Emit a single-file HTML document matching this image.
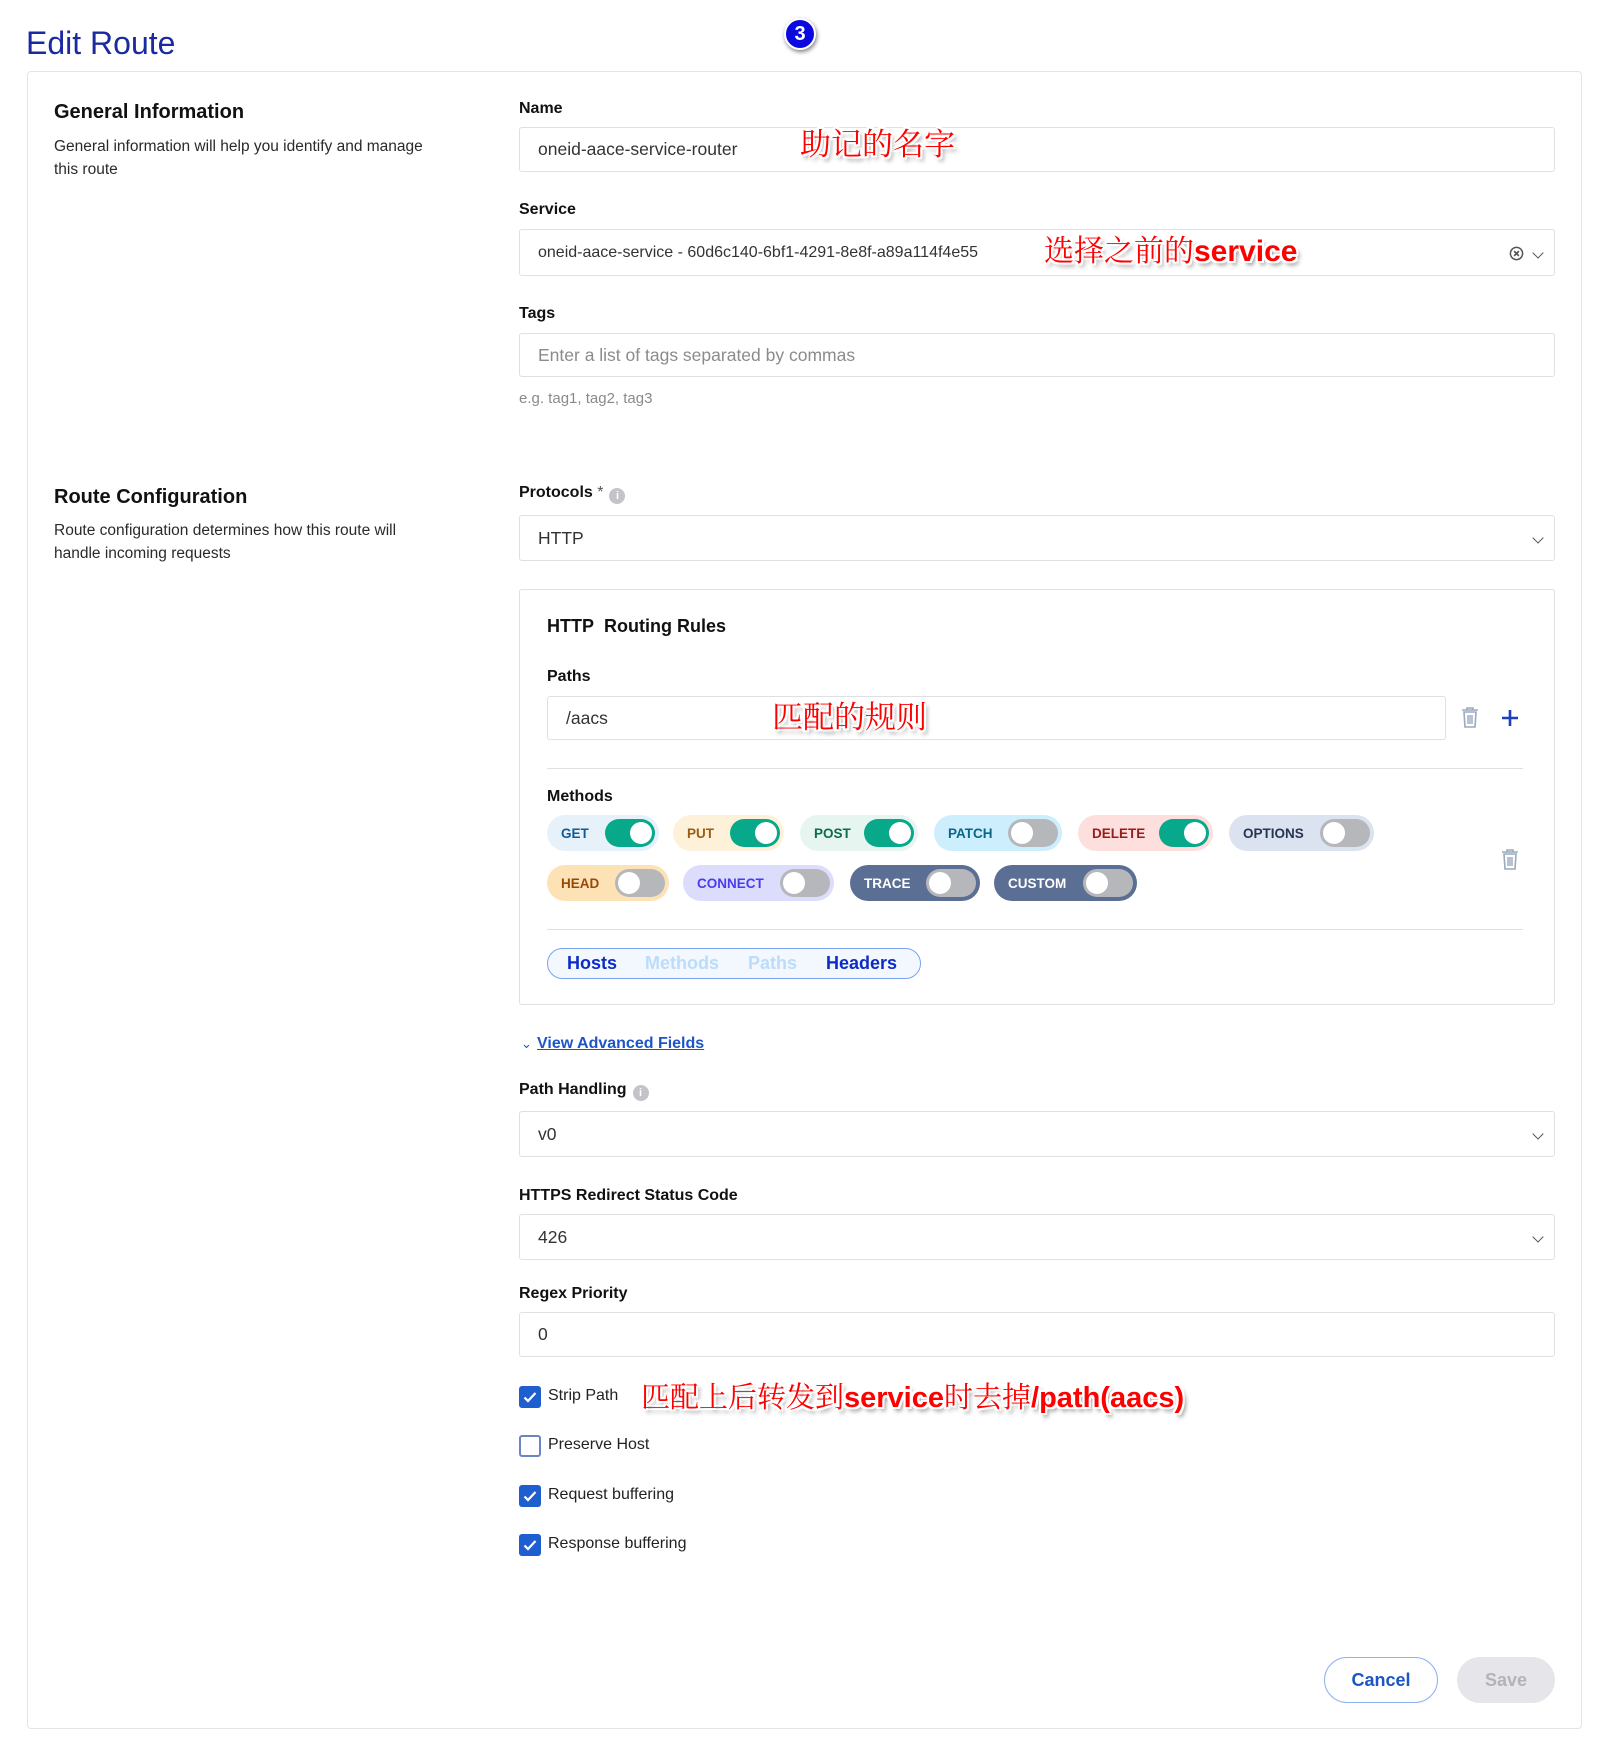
<!DOCTYPE html>
<html><head><meta charset="utf-8"><style>
*{box-sizing:border-box;margin:0;padding:0}
body{width:1608px;height:1754px;background:#fff;font-family:"Liberation Sans","Noto Sans CJK SC",sans-serif;position:relative;overflow:hidden;color:#111}
.a{position:absolute}
.card{left:27px;top:71px;width:1555px;height:1658px;border:1px solid #e3e4e8;border-radius:4px}
.h{font-weight:bold;font-size:20px;color:#111;left:54px}
.d{font-size:15.5px;line-height:23px;color:#2a2a2a;left:54px}
.lbl{font-weight:bold;font-size:16px;color:#111;left:519px}
.in{left:519px;width:1036px;border:1px solid #dfe0e4;border-radius:3px;background:#fff;font-size:17.5px;color:#333;padding-left:18px;display:flex;align-items:center}
.chev{position:absolute;right:12px;top:50%;margin-top:-4px;width:8px;height:8px;border-right:1.6px solid #555;border-bottom:1.6px solid #555;transform:rotate(45deg)}
.ann{color:#f00;font-size:31px;font-family:"Noto Serif CJK SC","Noto Sans CJK SC",serif;text-shadow:-2px -2px 0 #fff,2px -2px 0 #fff,-2px 2px 0 #fff,2px 2px 0 #fff,0 2px 0 #fff,2px 0 0 #fff,-2px 0 0 #fff,0 -2px 0 #fff,3px 4px 4px rgba(0,0,0,.45);white-space:nowrap}
.ann b{font-family:"Liberation Sans",sans-serif}
.pill{position:absolute;height:36px;border-radius:18px;font-weight:bold;font-size:13.5px;display:flex;align-items:center;padding-left:14px}
.tg{position:absolute;right:4px;top:4px;width:50px;height:28px;border-radius:14px;background:#b6b7bb}
.tg.on{background:#08a88a}
.tg::after{content:"";position:absolute;top:3px;left:3px;width:22px;height:22px;border-radius:50%;background:#fff}
.tg.on::after{left:25px}
.cb{position:absolute;left:519px;width:22px;height:22px;border-radius:3px;background:#1f5ecf}
.cb svg{position:absolute;left:3px;top:3px}
.cb.off{background:#fff;border:2px solid #6b84c4}
.cbl{position:absolute;left:548px;font-size:16px;color:#222}
.info{display:inline-block;width:16px;height:16px;border-radius:50%;background:#c3c4c7;color:#fff;font-size:11px;text-align:center;line-height:16px;font-weight:bold;vertical-align:-2px;margin-left:6px}
</style></head><body>
<div class="a" style="left:26px;top:25px;font-size:32px;color:#1b2aa0">Edit Route</div>
<div class="a" style="left:784px;top:18px;width:32px;height:32px;border-radius:50%;background:#0a0ae0;border:2px solid #fff;box-shadow:1px 2px 4px rgba(0,0,0,.5);color:#fff;font-weight:bold;font-size:20px;text-align:center;line-height:28px">3</div>
<div class="a card"></div>

<div class="a h" style="top:101px">General Information</div>
<div class="a d" style="top:135px">General information will help you identify and manage<br>this route</div>

<div class="a lbl" style="top:100px">Name</div>
<div class="a in" style="top:127px;height:45px">oneid-aace-service-router</div>
<div class="a ann" style="left:800px;top:119px">助记的名字</div>

<div class="a lbl" style="top:201px">Service</div>
<div class="a in" style="top:229px;height:47px;font-size:16px">oneid-aace-service - 60d6c140-6bf1-4291-8e8f-a89a114f4e55
<svg class="a" style="right:30px;top:16px" width="15" height="15" viewBox="0 0 16 16"><circle cx="8" cy="8" r="6.5" fill="none" stroke="#555" stroke-width="1.6"/><path d="M5.5 5.5l5 5M10.5 5.5l-5 5" stroke="#555" stroke-width="1.8"/></svg><span class="chev"></span></div>
<div class="a ann" style="left:1044px;top:226px;font-size:30px">选择之前的<b style="font-weight:bold">service</b></div>

<div class="a lbl" style="top:305px">Tags</div>
<div class="a in" style="top:333px;height:44px;color:#8b8b8b">Enter a list of tags separated by commas</div>
<div class="a" style="left:519px;top:390px;font-size:15px;color:#8a8a8a">e.g. tag1, tag2, tag3</div>

<div class="a h" style="top:486px">Route Configuration</div>
<div class="a d" style="top:519px">Route configuration determines how this route will<br>handle incoming requests</div>

<div class="a lbl" style="top:484px">Protocols <span style="font-weight:normal;color:#555">*</span><span class="info">i</span></div>
<div class="a in" style="top:515px;height:46px">HTTP<span class="chev"></span></div>

<div class="a" style="left:519px;top:589px;width:1036px;height:416px;border:1px solid #dfe0e4;border-radius:3px"></div>
<div class="a" style="left:547px;top:616px;font-weight:bold;font-size:18px">HTTP&nbsp; Routing Rules</div>
<div class="a lbl" style="left:547px;top:668px">Paths</div>
<div class="a in" style="left:547px;top:696px;width:899px;height:44px">/aacs</div>
<div class="a ann" style="left:772px;top:692px">匹配的规则</div>
<svg class="a" style="left:1460px;top:706px" width="20" height="22" viewBox="0 0 20 22"><path d="M2 4h16M7 4V2h6v2M4 6h12l-1 15H5z" fill="none" stroke="#9aa9bd" stroke-width="1.6"/><path d="M8 9v9M10 9v9M12 9v9" stroke="#9aa9bd" stroke-width="1.4"/></svg>
<svg class="a" style="left:1501px;top:709px" width="18" height="18" viewBox="0 0 18 18"><path d="M9 1v16M1 9h16" stroke="#1a3fc0" stroke-width="2.6"/></svg>
<div class="a" style="left:547px;top:768px;width:976px;height:1px;background:#dfe0e4"></div>
<div class="a lbl" style="left:547px;top:788px">Methods</div>

<div class="pill" style="left:547px;top:815px;width:112px;background:#e7f1fa;color:#0e5b99">GET<span class="tg on"></span></div>
<div class="pill" style="left:673px;top:815px;width:111px;background:#fdf2d9;color:#a05a0e">PUT<span class="tg on"></span></div>
<div class="pill" style="left:800px;top:815px;width:118px;background:#e6f5f0;color:#0b6c4e">POST<span class="tg on"></span></div>
<div class="pill" style="left:934px;top:815px;width:128px;background:#cdeefc;color:#0a6688">PATCH<span class="tg"></span></div>
<div class="pill" style="left:1078px;top:815px;width:135px;background:#fde0de;color:#991b1b">DELETE<span class="tg on"></span></div>
<div class="pill" style="left:1229px;top:815px;width:145px;background:#dbe3f0;color:#283552">OPTIONS<span class="tg"></span></div>
<div class="pill" style="left:547px;top:865px;width:122px;background:#fde2b5;color:#99480a">HEAD<span class="tg"></span></div>
<div class="pill" style="left:683px;top:865px;width:151px;background:#dcdcfc;color:#4a3bef">CONNECT<span class="tg"></span></div>
<div class="pill" style="left:850px;top:865px;width:130px;background:#5b6f95;color:#fff">TRACE<span class="tg"></span></div>
<div class="pill" style="left:994px;top:865px;width:143px;background:#5b6f95;color:#fff">CUSTOM<span class="tg"></span></div>
<svg class="a" style="left:1500px;top:848px" width="20" height="22" viewBox="0 0 20 22"><path d="M2 4h16M7 4V2h6v2M4 6h12l-1 15H5z" fill="none" stroke="#9aa9bd" stroke-width="1.6"/><path d="M8 9v9M10 9v9M12 9v9" stroke="#9aa9bd" stroke-width="1.4"/></svg>

<div class="a" style="left:547px;top:929px;width:976px;height:1px;background:#dfe0e4"></div>
<div class="a" style="left:547px;top:948px;width:374px;height:31px;border:1px solid #7aa2f2;border-radius:16px;background:#f3f8ff;font-weight:bold;font-size:18px;line-height:29px">
<span class="a" style="left:19px;color:#0d2cc6">Hosts</span><span class="a" style="left:97px;color:#bcdcfa">Methods</span><span class="a" style="left:200px;color:#bcdcfa">Paths</span><span class="a" style="left:278px;color:#0d2cc6">Headers</span></div>

<div class="a" style="left:521px;top:1036px;font-size:13px;color:#1d55c9">&#8964;</div>
<div class="a" style="left:537px;top:1035px;font-size:16px;font-weight:bold;color:#1d55c9;text-decoration:underline">View Advanced Fields</div>

<div class="a lbl" style="top:1081px">Path Handling<span class="info">i</span></div>
<div class="a in" style="top:1111px;height:46px">v0<span class="chev"></span></div>
<div class="a lbl" style="top:1187px">HTTPS Redirect Status Code</div>
<div class="a in" style="top:1214px;height:46px">426<span class="chev"></span></div>
<div class="a lbl" style="top:1285px">Regex Priority</div>
<div class="a in" style="top:1312px;height:45px">0</div>

<div class="cb" style="top:1386px"><svg width="16" height="16" viewBox="0 0 16 16"><path d="M2.5 8.5l3.5 3.5 7.5-8" fill="none" stroke="#fff" stroke-width="2.2"/></svg></div>
<div class="cbl" style="top:1387px">Strip Path</div>
<div class="a ann" style="left:641px;top:1375px;font-size:29px">匹配上后转发到<b>service</b>时去掉<b>/path(aacs)</b></div>
<div class="cb off" style="top:1435px"></div>
<div class="cbl" style="top:1436px">Preserve Host</div>
<div class="cb" style="top:1485px"><svg width="16" height="16" viewBox="0 0 16 16"><path d="M2.5 8.5l3.5 3.5 7.5-8" fill="none" stroke="#fff" stroke-width="2.2"/></svg></div>
<div class="cbl" style="top:1486px">Request buffering</div>
<div class="cb" style="top:1534px"><svg width="16" height="16" viewBox="0 0 16 16"><path d="M2.5 8.5l3.5 3.5 7.5-8" fill="none" stroke="#fff" stroke-width="2.2"/></svg></div>
<div class="cbl" style="top:1535px">Response buffering</div>

<div class="a" style="left:1324px;top:1657px;width:114px;height:46px;border:1px solid #8fb0f5;border-radius:23px;text-align:center;line-height:44px;font-weight:bold;font-size:18px;color:#1d55c9">Cancel</div>
<div class="a" style="left:1457px;top:1657px;width:98px;height:46px;border-radius:23px;background:#e6e6ea;text-align:center;line-height:46px;font-weight:bold;font-size:18px;color:#b3b3b8">Save</div>
</body></html>
